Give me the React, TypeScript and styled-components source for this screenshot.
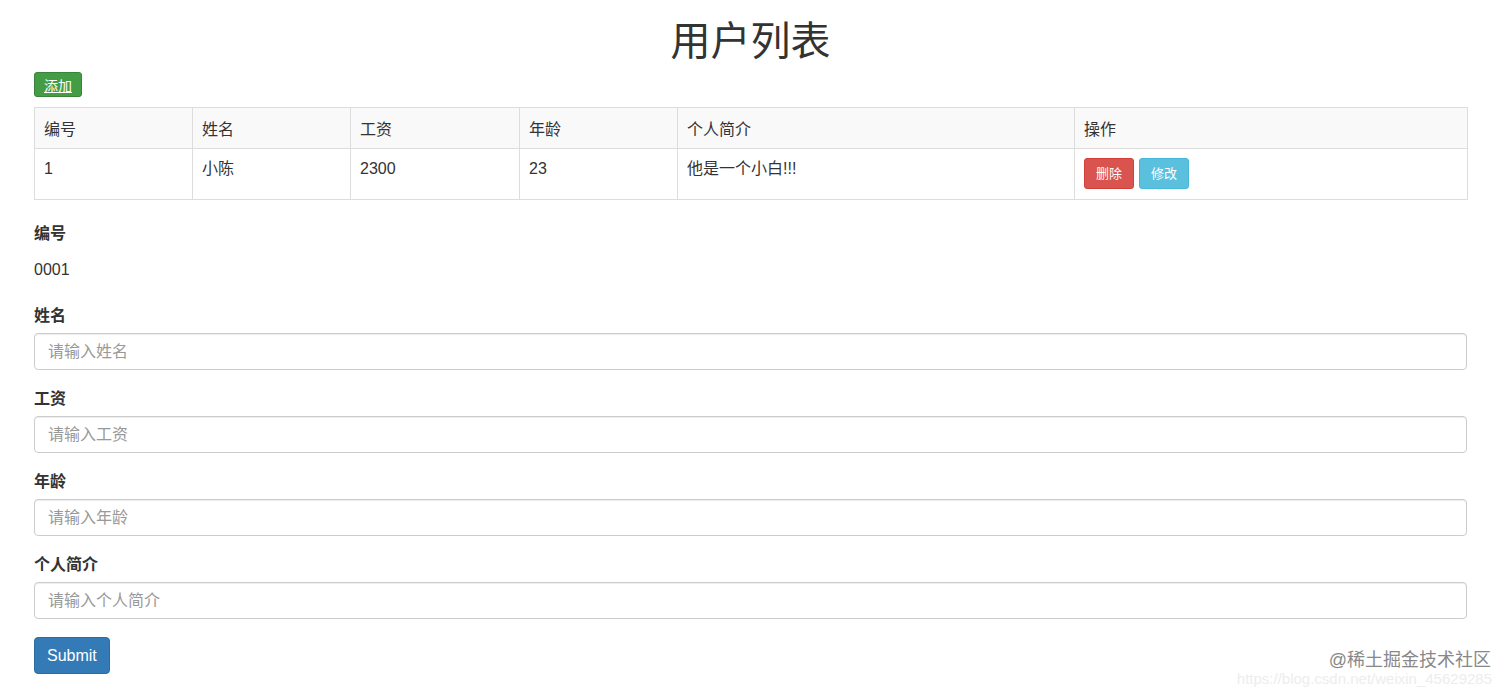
import React from "react";
import styled, { createGlobalStyle } from "styled-components";

const GlobalStyle = createGlobalStyle`
  * { box-sizing: border-box; }
  body {
    margin: 0;
    background: #ffffff;
    color: #333333;
    font-family: "Liberation Sans", "Noto Sans CJK SC", sans-serif;
    font-size: 16px;
  }
`;

const Page = styled.div`
  position: relative;
  width: 1512px;
  height: 695px;
  padding: 0 45px 0 34px;
  overflow: hidden;
`;

const Title = styled.h1`
  margin: 19px 0 9px;
  text-align: center;
  font-size: 40px;
  line-height: 44px;
  font-weight: 400;
  color: #333;
`;

const SmallButton = styled.a<{ $bg: string; $border: string }>`
  display: inline-flex;
  align-items: center;
  justify-content: center;
  height: 25px;
  padding: 0 10px;
  font-size: 14px;
  color: #fff;
  background: ${(p) => p.$bg};
  border: 1px solid ${(p) => p.$border};
  border-radius: 3px;
  cursor: pointer;
`;

const AddButton = styled(SmallButton)`
  padding: 0 9px;
  text-decoration: underline;
  margin-bottom: 10px;
`;

const ActionButton = styled(SmallButton)`
  height: 31px;
  padding: 0 11px;
  font-size: 13px;
  text-decoration: none;
  border-radius: 3px;
`;

const Table = styled.table`
  width: 100%;
  border-collapse: collapse;
  border: 1px solid #ddd;
  margin-bottom: 23px;
  table-layout: fixed;
`;

const Th = styled.th<{ $w: number }>`
  width: ${(p) => p.$w}px;
  height: 41px;
  padding: 0 9px;
  text-align: left;
  font-weight: 400;
  font-size: 16px;
  background: #f9f9f9;
  border: 1px solid #ddd;
`;

const Td = styled.td`
  height: 51px;
  padding: 9px 9px 0;
  vertical-align: top;
  font-size: 16px;
  line-height: 22px;
  border: 1px solid #ddd;
`;

const Actions = styled.div`
  display: flex;
  gap: 5px;
`;

const FormGroup = styled.div`
  display: flex;
  flex-direction: column;
  margin-bottom: 18px;
`;

const Label = styled.label`
  font-weight: 700;
  font-size: 16px;
  line-height: 22px;
  margin-bottom: 6px;
`;

const Static = styled.div`
  height: 36px;
  padding-top: 8px;
  font-size: 16px;
  line-height: 22px;
`;

const Input = styled.input`
  width: 100%;
  height: 37px;
  padding: 6px 13px;
  font-family: inherit;
  font-size: 16px;
  color: #555;
  border: 1px solid #ccc;
  border-radius: 4px;
  box-shadow: inset 0 1px 1px rgba(0, 0, 0, 0.075);
  outline: none;

  &::placeholder {
    color: #999;
  }
`;

const SubmitButton = styled.button`
  height: 37px;
  padding: 0 12px;
  font-family: inherit;
  font-size: 16px;
  color: #fff;
  background: #337ab7;
  border: 1px solid #2e6da4;
  border-radius: 4px;
  cursor: pointer;
`;

const Watermark = styled.div`
  position: absolute;
  right: 20px;
  bottom: 8px;
  display: flex;
  flex-direction: column;
  align-items: flex-end;
`;

const WatermarkMain = styled.span`
  font-size: 18px;
  line-height: 22px;
  color: #888;
  margin-right: 1px;
`;

const WatermarkUrl = styled.span`
  font-size: 15px;
  line-height: 16px;
  color: #ededed;
`;

const columns = [
  { label: "编号", w: 158 },
  { label: "姓名", w: 158 },
  { label: "工资", w: 169 },
  { label: "年龄", w: 158 },
  { label: "个人简介", w: 397 },
  { label: "操作", w: 393 },
];

const users = [{ id: 1, name: "小陈", salary: 2300, age: 23, intro: "他是一个小白!!!" }];

const fields = [
  { label: "姓名", placeholder: "请输入姓名" },
  { label: "工资", placeholder: "请输入工资" },
  { label: "年龄", placeholder: "请输入年龄" },
  { label: "个人简介", placeholder: "请输入个人简介" },
];

export default function App() {
  return (
    <Page>
      <GlobalStyle />
      <Title>用户列表</Title>
      <AddButton $bg="#449d44" $border="#398439">
        添加
      </AddButton>
      <Table>
        <thead>
          <tr>
            {columns.map((c) => (
              <Th key={c.label} $w={c.w}>
                {c.label}
              </Th>
            ))}
          </tr>
        </thead>
        <tbody>
          {users.map((u) => (
            <tr key={u.id}>
              <Td>{u.id}</Td>
              <Td>{u.name}</Td>
              <Td>{u.salary}</Td>
              <Td>{u.age}</Td>
              <Td>{u.intro}</Td>
              <Td>
                <Actions>
                  <ActionButton $bg="#d9534f" $border="#d43f3a">
                    删除
                  </ActionButton>
                  <ActionButton $bg="#5bc0de" $border="#46b8da">
                    修改
                  </ActionButton>
                </Actions>
              </Td>
            </tr>
          ))}
        </tbody>
      </Table>
      <form onSubmit={(e) => e.preventDefault()}>
        <FormGroup>
          <Label>编号</Label>
          <Static>0001</Static>
        </FormGroup>
        {fields.map((f) => (
          <FormGroup key={f.label}>
            <Label>{f.label}</Label>
            <Input placeholder={f.placeholder} />
          </FormGroup>
        ))}
        <SubmitButton type="submit">Submit</SubmitButton>
      </form>
      <Watermark>
        <WatermarkMain>@稀土掘金技术社区</WatermarkMain>
        <WatermarkUrl>https://blog.csdn.net/weixin_45629285</WatermarkUrl>
      </Watermark>
    </Page>
  );
}
